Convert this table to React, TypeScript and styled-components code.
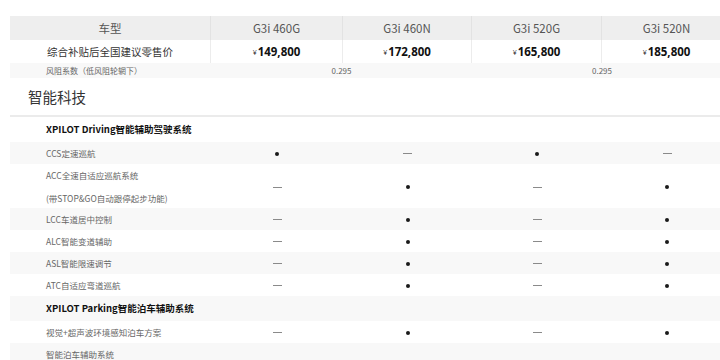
import React from 'react'
import styled, { createGlobalStyle } from 'styled-components'

const GlobalStyle = createGlobalStyle`
  html, body {
    margin: 0;
    padding: 0;
    background: #ffffff;
    overflow: hidden;
  }
  body {
    font-family: "Noto Sans CJK SC", "Noto Sans", sans-serif;
    color: #333;
  }
`

const models = ['G3i 460G', 'G3i 460N', 'G3i 520G', 'G3i 520N']
const prices = ['149,800', '172,800', '165,800', '185,800']

type Mark = 'dot' | 'dash' | ''

type Feature = {
  label: string[]
  title?: boolean
  marks?: Mark[]
}

const features: Feature[] = [
  { label: ['XPILOT Driving智能辅助驾驶系统'], title: true },
  { label: ['CCS定速巡航'], marks: ['dot', 'dash', 'dot', 'dash'] },
  { label: ['ACC全速自适应巡航系统', '(带STOP&GO自动跟停起步功能)'], marks: ['dash', 'dot', 'dash', 'dot'] },
  { label: ['LCC车道居中控制'], marks: ['dash', 'dot', 'dash', 'dot'] },
  { label: ['ALC智能变道辅助'], marks: ['dash', 'dot', 'dash', 'dot'] },
  { label: ['ASL智能限速调节'], marks: ['dash', 'dot', 'dash', 'dot'] },
  { label: ['ATC自适应弯道巡航'], marks: ['dash', 'dot', 'dash', 'dot'] },
  { label: ['XPILOT Parking智能泊车辅助系统'], title: true },
  { label: ['视觉+超声波环境感知泊车方案'], marks: ['dash', 'dot', 'dash', 'dot'] },
  { label: ['智能泊车辅助系统'], marks: ['', '', '', ''] },
]

const App = () => {
  return (
    <Page>
      <GlobalStyle />
      <PriceTable>
        <HeadCell>车型</HeadCell>
        {models.map((m) => (
          <HeadCell key={m}>{m}</HeadCell>
        ))}
        <PriceLabel>综合补贴后全国建议零售价</PriceLabel>
        {prices.map((p) => (
          <PriceCell key={p}>
            <Yen>¥</Yen>
            {p}
          </PriceCell>
        ))}
      </PriceTable>
      <DragRow>
        <DragLabel>风阻系数（低风阻轮辋下）</DragLabel>
        <DragValue>0.295</DragValue>
        <DragValue>0.295</DragValue>
      </DragRow>
      <SectionTitle>智能科技</SectionTitle>
      <FeatureTable>
        {features.map((f, i) => (
          <FeatureRow key={i} $odd={i % 2 === 1} $title={f.title} $tall={f.label.length > 1}>
            <FeatureLabel $title={f.title}>
              {f.label.map((l) => (
                <div key={l}>{l}</div>
              ))}
            </FeatureLabel>
            {(f.marks || ['', '', '', '']).map((m, j) => (
              <ValueCell key={j}>
                {m === 'dot' && <Dot />}
                {m === 'dash' && <Dash />}
              </ValueCell>
            ))}
          </FeatureRow>
        ))}
      </FeatureTable>
    </Page>
  )
}

export default App

const columns = '201px 132px 129px 130px 130px'

const Page = styled.div`
  width: 722px;
  padding: 16px 0 0 10px;
`

const PriceTable = styled.div`
  display: grid;
  grid-template-columns: ${columns};
  grid-template-rows: 24px 23px;
`

const HeadCell = styled.div`
  background: #eeeeee;
  border-right: 1px solid #e2e2e2;
  display: flex;
  align-items: center;
  justify-content: center;
  font-size: 11.5px;
  color: #555;
`

const PriceLabel = styled.div`
  border-right: 1px solid #ececec;
  display: flex;
  align-items: center;
  justify-content: center;
  font-size: 10.5px;
  color: #333;
`

const PriceCell = styled.div`
  border-right: 1px solid #ececec;
  display: flex;
  align-items: center;
  justify-content: center;
  font-family: "Open Sans", "Noto Sans", sans-serif;
  font-weight: 700;
  font-size: 11.5px;
  color: #111;
`

const Yen = styled.span`
  font-size: 7px;
  font-weight: 400;
  margin-right: 1px;
  margin-top: 2px;
`

const DragRow = styled.div`
  display: grid;
  grid-template-columns: 201px 261px 260px;
  height: 15px;
  background: #f8f8f8;
  font-size: 8px;
  color: #666;
`

const DragLabel = styled.div`
  padding-left: 36px;
  display: flex;
  align-items: center;
`

const DragValue = styled.div`
  display: flex;
  align-items: center;
  justify-content: center;
`

const SectionTitle = styled.div`
  height: 37px;
  border-bottom: 2px solid #ebebeb;
  padding-left: 18px;
  display: flex;
  align-items: center;
  font-size: 14.5px;
  color: #333;
`

const FeatureTable = styled.div`
  display: flex;
  flex-direction: column;
`

const FeatureRow = styled.div<{ $odd: boolean; $title?: boolean; $tall?: boolean }>`
  display: grid;
  grid-template-columns: ${columns};
  height: ${(p) => (p.$tall ? '44px' : p.$title ? '25px' : '22px')};
  background: ${(p) => (p.$odd ? '#f8f8f8' : '#ffffff')};
`

const FeatureLabel = styled.div<{ $title?: boolean }>`
  padding-left: 36px;
  display: flex;
  flex-direction: column;
  justify-content: center;
  font-size: ${(p) => (p.$title ? '9.5px' : '8.5px')};
  font-weight: ${(p) => (p.$title ? 700 : 400)};
  color: ${(p) => (p.$title ? '#111' : '#666')};
  line-height: 23px;
  white-space: nowrap;
`

const ValueCell = styled.div`
  display: flex;
  align-items: center;
  justify-content: center;
`

const Dot = styled.span`
  width: 4px;
  height: 4px;
  border-radius: 50%;
  background: #1a1a1a;
`

const Dash = styled.span`
  width: 9px;
  height: 1px;
  background: #8a8a8a;
`
